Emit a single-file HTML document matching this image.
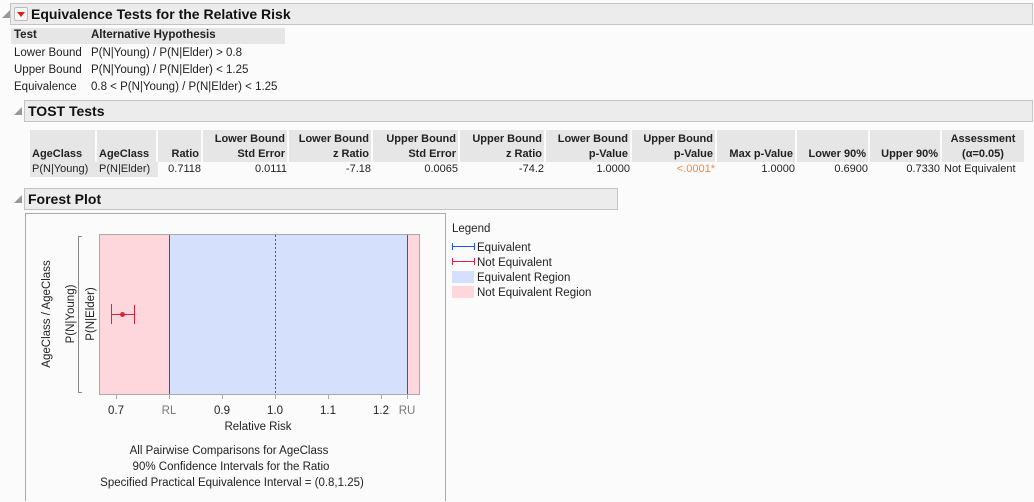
<!DOCTYPE html>
<html><head><style>
body{margin:0;width:1034px;height:502px;background:#fbfbfb;font-family:"Liberation Sans",sans-serif;font-size:11.5px;color:#222;position:relative;overflow:hidden}
.a{position:absolute;white-space:nowrap}
.hdr{position:absolute;background:#ececec;border:1px solid #c4c4c4;height:20px;font-weight:bold;font-size:14px;line-height:20px;color:#111}
.tri{position:absolute;width:0;height:0;border-left:8px solid transparent;border-bottom:8px solid #999}
th,td{padding:0 2px;white-space:nowrap;overflow:hidden}
table{border-collapse:separate;border-spacing:0;position:absolute;font-size:11px;table-layout:fixed;width:994px}
.t2 th{background:#e6e6e6;font-weight:bold;text-align:right;vertical-align:bottom;line-height:15px;border-right:2px solid #fbfbfb;height:32px}
.t2 td{text-align:right;line-height:15px}
</style></head><body>
<div class="tri" style="left:2px;top:10px"></div>
<div class="hdr" style="left:10px;top:3px;width:1021px"><span style="position:absolute;left:3px;top:3px;width:12px;height:12px;border:1px solid #bbb;background:#f6f6f6;border-radius:2px"></span><span style="position:absolute;left:6px;top:8px;border-left:4px solid transparent;border-right:4px solid transparent;border-top:5px solid #d21"></span><span style="position:absolute;left:20px">Equivalence Tests for the Relative Risk</span></div>
<div class="a" style="left:11px;top:28px;width:274px;height:16px;background:#e6e6e6"></div>
<div class="a" style="left:14px;top:29px;font-weight:bold">Test</div>
<div class="a" style="left:91px;top:29px;font-weight:bold">Alternative Hypothesis</div>
<div class="a" style="left:14px;top:47px">Lower Bound</div><div class="a" style="left:91px;top:47px">P(N|Young) / P(N|Elder) &gt; 0.8</div>
<div class="a" style="left:14px;top:64px">Upper Bound</div><div class="a" style="left:91px;top:64px">P(N|Young) / P(N|Elder) &lt; 1.25</div>
<div class="a" style="left:14px;top:81px">Equivalence</div><div class="a" style="left:91px;top:81px">0.8 &lt; P(N|Young) / P(N|Elder) &lt; 1.25</div>

<div class="tri" style="left:14px;top:107px"></div>
<div class="hdr" style="left:24px;top:100px;width:1007px"><span style="position:absolute;left:3px">TOST Tests</span></div>
<table class="t2" style="left:30px;top:130px">
<colgroup><col style="width:67px"><col style="width:61px"><col style="width:45px"><col style="width:86px"><col style="width:84px"><col style="width:87px"><col style="width:86px"><col style="width:86px"><col style="width:85px"><col style="width:80px"><col style="width:73px"><col style="width:72px"><col style="width:82px"></colgroup>
<tr><th style="text-align:left">AgeClass</th><th style="text-align:left">AgeClass</th><th>Ratio</th><th>Lower Bound<br>Std Error</th><th>Lower Bound<br>z Ratio</th><th>Upper Bound<br>Std Error</th><th>Upper Bound<br>z Ratio</th><th>Lower Bound<br>p-Value</th><th>Upper Bound<br>p-Value</th><th>Max p-Value</th><th>Lower 90%</th><th>Upper 90%</th><th style="text-align:center;border-right:0">Assessment<br>(α=0.05)</th></tr>
<tr><td style="text-align:left;background:#e6e6e6">P(N|Young)</td><td style="text-align:left;background:#e6e6e6">P(N|Elder)</td><td>0.7118</td><td>0.0111</td><td>-7.18</td><td>0.0065</td><td>-74.2</td><td>1.0000</td><td style="color:#f08a3c">&lt;.0001*</td><td>1.0000</td><td>0.6900</td><td>0.7330</td><td style="text-align:left;padding:0 0 0 2px">Not Equivalent</td></tr>
</table>

<div class="tri" style="left:14px;top:195px"></div>
<div class="hdr" style="left:24px;top:188px;width:592px"><span style="position:absolute;left:3px">Forest Plot</span></div>
<div class="a" style="left:25px;top:213px;width:419px;height:287px;border:1px solid #aaa;border-bottom:0;background:#fbfbfb"></div>
<svg class="a" style="left:0;top:0" width="1034" height="502">
<rect x="99.5" y="234.5" width="320" height="160" fill="#fdd7dc" stroke="#aaa"/>
<rect x="169.5" y="235" width="237.5" height="159" fill="#d5e1fc"/>
<line x1="169.5" y1="235" x2="169.5" y2="394" stroke="#555"/>
<line x1="407.5" y1="235" x2="407.5" y2="394" stroke="#555"/>
<line x1="275.5" y1="235" x2="275.5" y2="394" stroke="#2255ee" stroke-dasharray="2,2"/>
<path d="M82 236.5H78.5V392.5H82" fill="none" stroke="#888"/>
<g stroke="#aaa"><line x1="116.5" y1="394" x2="116.5" y2="399"/><line x1="169.5" y1="394" x2="169.5" y2="399"/><line x1="222.5" y1="394" x2="222.5" y2="399"/><line x1="275.5" y1="394" x2="275.5" y2="399"/><line x1="328.5" y1="394" x2="328.5" y2="399"/><line x1="381.5" y1="394" x2="381.5" y2="399"/><line x1="407.5" y1="394" x2="407.5" y2="399"/></g>
<g stroke="#e0243c"><line x1="111.5" y1="314.5" x2="134.5" y2="314.5"/><line x1="111.5" y1="304" x2="111.5" y2="324"/><line x1="134.5" y1="305" x2="134.5" y2="324"/></g>
<circle cx="122.5" cy="314.5" r="2.5" fill="#e0243c"/>
<g font-family="Liberation Sans" font-size="11.5" text-anchor="middle" fill="#222">
<text x="116" y="414">0.7</text><text x="169" y="414" fill="#777">RL</text><text x="222" y="414">0.9</text><text x="275" y="414">1.0</text><text x="328" y="414">1.1</text><text x="381" y="414">1.2</text><text x="407" y="414" fill="#777">RU</text>
<text x="258" y="430">Relative Risk</text>
<text x="229" y="454">All Pairwise Comparisons for AgeClass</text>
<text x="231" y="470">90% Confidence Intervals for the Ratio</text>
<text x="232" y="486">Specified Practical Equivalence Interval = (0.8,1.25)</text>
<text transform="translate(50,314) rotate(-90)">AgeClass / AgeClass</text>
<text transform="translate(74,314) rotate(-90)">P(N|Young)</text>
<text transform="translate(94,314) rotate(-90)">P(N|Elder)</text>
</g>
<g font-family="Liberation Sans" font-size="11.5" fill="#222">
<text x="452" y="232">Legend</text>
<text x="477" y="251">Equivalent</text><text x="477" y="266">Not Equivalent</text><text x="477" y="281">Equivalent Region</text><text x="477" y="296">Not Equivalent Region</text>
</g>
<g stroke="#2255ee"><line x1="452" y1="246.5" x2="475" y2="246.5"/><line x1="452.5" y1="243" x2="452.5" y2="250"/><line x1="474.5" y1="243" x2="474.5" y2="250"/></g>
<g stroke="#e0243c"><line x1="452" y1="261.5" x2="475" y2="261.5"/><line x1="452.5" y1="258" x2="452.5" y2="265"/><line x1="474.5" y1="258" x2="474.5" y2="265"/></g>
<rect x="452" y="271" width="22" height="12" fill="#d5e1fc"/>
<rect x="452" y="286" width="22" height="12" fill="#fdd7dc"/>
</svg>
</body></html>
